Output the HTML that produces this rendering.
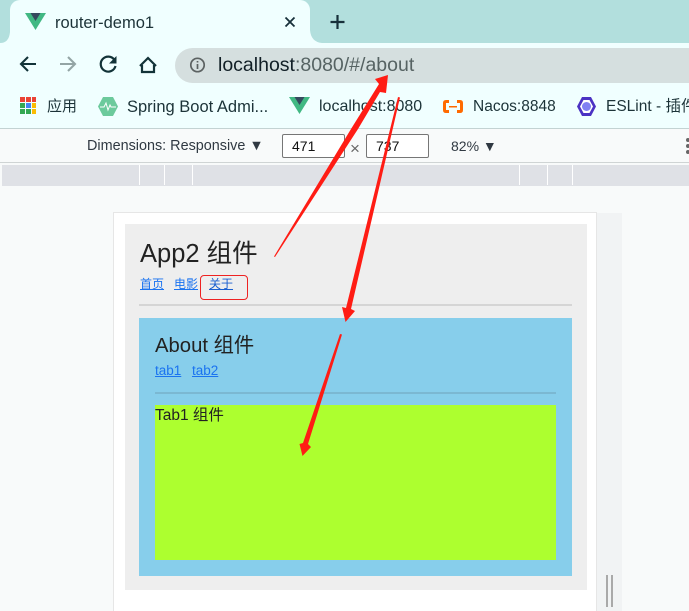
<!DOCTYPE html>
<html><head><meta charset="utf-8">
<style>
html,body{margin:0;padding:0;width:689px;height:611px;overflow:hidden;background:#f8fafa}
body{position:relative;font-family:"Liberation Sans","Noto Sans CJK SC",sans-serif}
.a{position:absolute;white-space:nowrap}
.u{text-decoration:underline;color:#1a73f0;font-size:12px}
.b{top:98px;line-height:18px;color:#1c3338}
</style></head><body>
<!-- tab strip -->
<div class="a" style="left:0;top:0;width:689px;height:43px;background:#b2dfdd"></div>
<div class="a" style="left:0;top:43px;width:689px;height:85px;background:#f0ffff"></div>
<div class="a" style="left:0;top:128px;width:689px;height:1px;background:#c3d3d3"></div>
<div class="a" style="left:10px;top:0;width:300px;height:43px;background:#f0ffff;border-radius:10px 10px 0 0"></div>
<div class="a" style="left:175px;top:48px;width:514px;height:35px;background:#d5dfdf;border-radius:18px 0 0 18px"></div>
<svg class="a" style="left:0;top:0" width="689" height="130">
 <path d="M0 43Q9 43 10 32V43Z" fill="#f0ffff"/>
 <path d="M310 30Q311 42 322 43H310Z" fill="#f0ffff"/>
 <path d="M25 13H46L35.500 30Z" fill="#41b883"/><path d="M30.500 13H40.500L35.500 21Z" fill="#35495e"/>
 <path d="M285.500 17.500L294.500 26.500M294.500 17.500L285.500 26.500" stroke="#17303a" stroke-width="1.800"/>
 <path d="M337.500 15V29M330.500 22H344.500" stroke="#17303a" stroke-width="2.200"/>
 <path d="M36 64H21M28 57L21 64L28 71" fill="none" stroke="#123338" stroke-width="2.100"/>
 <path d="M60 64H75M68 57L75 64L68 71" fill="none" stroke="#93a5a5" stroke-width="2.100"/>
 <path d="M114.500 60A7.500 7.500 0 1 0 115.500 66" fill="none" stroke="#123338" stroke-width="2.200"/><path d="M116.500 56V63.500H109Z" fill="#123338"/>
 <path d="M142 65V72H154V65M140 66L148 58L156 66" fill="none" stroke="#123338" stroke-width="2.200"/>
 <circle cx="197.500" cy="65" r="6.700" fill="none" stroke="#5c6262" stroke-width="1.700"/><path d="M197.500 64V69M197.500 61V62.500" stroke="#5c6262" stroke-width="1.700"/>
 <g fill="#ea4335"><rect x="20" y="97" width="5" height="5"/><rect x="26" y="97" width="5" height="5"/><rect x="32" y="97" width="4" height="5"/></g>
 <g><rect x="20" y="103" width="5" height="5" fill="#34a853"/><rect x="26" y="103" width="5" height="5" fill="#4285f4"/><rect x="32" y="103" width="4" height="5" fill="#fbbc04"/></g>
 <g><rect x="20" y="109" width="5" height="5" fill="#34a853"/><rect x="26" y="109" width="5" height="5" fill="#34a853"/><rect x="32" y="109" width="4" height="5" fill="#fbbc04"/></g>
 <path d="M103 97H113L118 106.500L113 116H103L98 106.500Z" fill="#6cca9c"/><path d="M100 107H104L106 103L108 110L110 105L111 107H116" fill="none" stroke="#fff" stroke-width="1"/>
 <path d="M289 97H310L299.500 114Z" fill="#41b883"/><path d="M294.500 97H304.500L299.500 105Z" fill="#35495e"/>
 <path d="M449 101.500H446Q444.500 101.500 444.500 103V110Q444.500 111.500 446 111.500H449M457 101.500H460Q461.500 101.500 461.500 103V110Q461.500 111.500 460 111.500H457" fill="none" stroke="#ff6a00" stroke-width="3"/><rect x="449" y="106" width="8" height="1.500" fill="#ff6a00"/>
 <path d="M582 97H591L596 106.500L591 116H582L577 106.500Z" fill="#4b32c3"/><path d="M583.500 100H589.500L593 106.500L589.500 113H583.500L580 106.500Z" fill="#fff"/><circle cx="586.500" cy="106.500" r="4.500" fill="#8080f2"/>
</svg>
<div class="a" style="left:55px;top:14px;font-size:16.500px;color:#1c3338">router-demo1</div>
<div class="a" style="left:218px;top:54px;font-size:19.500px;color:#111f26">localhost<span style="color:#566363">:8080/#/about</span></div>
<div class="a b" style="left:47px;font-size:15px">应用</div>
<div class="a b" style="left:127px;font-size:16.500px">Spring Boot Admi...</div>
<div class="a b" style="left:319px;font-size:16px">localhost:8080</div>
<div class="a b" style="left:473px;font-size:15.500px">Nacos:8848</div>
<div class="a b" style="left:606px;font-size:15.500px">ESLint - 插件</div>
<!-- devtools bar -->
<div class="a" style="left:0;top:129px;width:689px;height:33px;background:#f8fafa;border-bottom:1px solid #cfd4d4"></div>
<div class="a" style="left:87px;top:138px;font-size:14.400px;color:#303942">Dimensions: Responsive ▼</div>
<div class="a" style="left:282px;top:134px;width:61px;height:22px;background:#fff;border:1px solid #767676;border-radius:2px;font-size:14px;line-height:22px;color:#111;text-indent:9px">471</div>
<div class="a" style="left:366px;top:134px;width:61px;height:22px;background:#fff;border:1px solid #767676;border-radius:2px;font-size:14px;line-height:22px;color:#111;text-indent:9px">737</div>
<div class="a" style="left:350px;top:139px;font-size:17px;color:#666">×</div>
<div class="a" style="left:451px;top:138px;font-size:14px;color:#303942">82% ▼</div>
<div class="a" style="left:686px;top:138px;width:4px;height:4px;border-radius:2px;background:#666;box-shadow:0 6px #666,0 12px #666"></div>
<!-- ruler -->
<div class="a" style="left:2px;top:165px;width:687px;height:21px;background:#dfe1e6"></div>
<div class="a" style="left:139px;top:165px;width:1px;height:20px;background:#fff;box-shadow:25px 0 #fff,53px 0 #fff,380px 0 #fff,408px 0 #fff,433px 0 #fff"></div>
<!-- viewport -->
<div class="a" style="left:113px;top:212px;width:484px;height:399px;background:#fff;border:1px solid #e6e6e6;border-bottom:0;box-sizing:border-box"></div>
<div class="a" style="left:597px;top:213px;width:25px;height:398px;background:#f1f3f4"></div>
<div class="a" style="left:606px;top:575px;width:2px;height:32px;background:#a9a9a9;box-shadow:5px 0 #a9a9a9"></div>
<!-- App2 -->
<div class="a" style="left:125px;top:224px;width:462px;height:366px;background:#eee"></div>
<div class="a" style="left:140px;top:239px;font-size:25.500px;color:#222;line-height:30px">App2 组件</div>
<div class="a u" style="left:140px;top:275px">首页</div>
<div class="a u" style="left:174px;top:275px">电影</div>
<div class="a u" style="left:209px;top:275px;color:#1a5fd0">关于</div>
<div class="a" style="left:200px;top:275px;width:46px;height:23px;border:1px solid #ee2222;border-radius:4px"></div>
<div class="a" style="left:139px;top:304px;width:433px;height:2px;background:#d5d5d5"></div>
<!-- About -->
<div class="a" style="left:139px;top:318px;width:433px;height:258px;background:#87ceeb"></div>
<div class="a" style="left:155px;top:334px;font-size:20.300px;color:#222;line-height:24px">About 组件</div>
<div class="a u" style="left:155px;top:363px;font-size:13.500px">tab1</div>
<div class="a u" style="left:192px;top:363px;font-size:13.500px">tab2</div>
<div class="a" style="left:155px;top:392px;width:401px;height:2px;background:#7bb8d2"></div>
<div class="a" style="left:155px;top:405px;width:401px;height:155px;background:#adff2f"></div>
<div class="a" style="left:155px;top:407px;font-size:15.500px;color:#222;line-height:18px">Tab1 组件</div>
<!-- arrows -->
<svg class="a" style="left:0;top:0" width="689" height="611">
 <g fill="#ff1c14">
  <path d="M274 256.500L275 257L358 129L380 92L386 93L388 75L375 79L379 84L351 129Z"/>
  <path d="M398 97L400 97.500L351 309L355 311L345.500 322L342 307L346 308Z"/>
  <path d="M340 334L342 334.500L308 444L311 447L302.500 456L299.500 444L303 443Z"/>
 </g>
</svg>
</body></html>
